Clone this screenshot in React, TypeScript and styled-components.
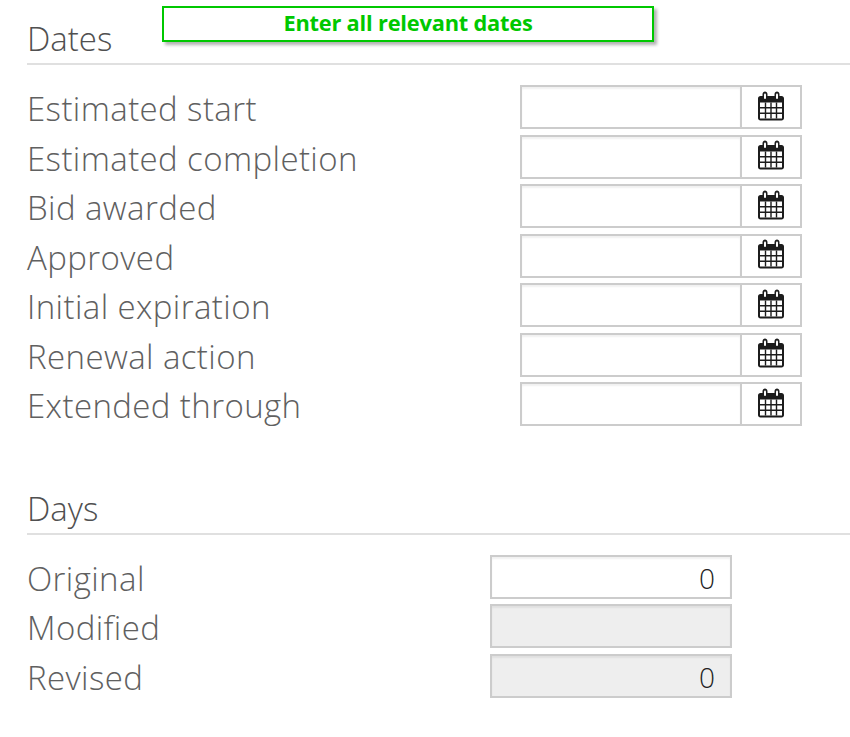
import React from "react";
import styled, { createGlobalStyle } from "styled-components";

const GlobalStyle = createGlobalStyle`
  html, body {
    margin: 0;
    padding: 0;
    background: #fff;
    font-family: "Open Sans", "Noto Sans", "Liberation Sans", sans-serif;
  }
`;

const Page = styled.div`
  position: relative;
  width: 850px;
  height: 737px;
  overflow: hidden;
  padding-left: 27px;
  box-sizing: border-box;
`;

const Section = styled.section<{ $top: number }>`
  padding-top: ${(p) => p.$top}px;
`;

const SectionTitle = styled.h2`
  margin: 0;
  height: 41px;
  line-height: 33px;
  font-size: 33px;
  font-weight: 300;
  color: #505050;
  border-bottom: 2px solid #e0e0e0;
`;

const Rows = styled.div`
  padding-top: 20px;
  display: flex;
  flex-direction: column;
`;

const Row = styled.div`
  height: 49.5px;
  display: flex;
  align-items: flex-start;
`;

const Label = styled.label<{ $width: number }>`
  width: ${(p) => p.$width}px;
  flex: none;
  height: 44px;
  line-height: 48px;
  font-size: 33px;
  font-weight: 300;
  letter-spacing: 0.4px;
  color: #606060;
  white-space: nowrap;
`;

const DateField = styled.div`
  width: 282px;
  height: 44px;
  box-sizing: border-box;
  display: flex;
  border: 2px solid #cccccc;
  background: #fff;
`;

const DateInput = styled.div`
  flex: 1;
  box-shadow: inset 0 2px 2px rgba(0, 0, 0, 0.06);
`;

const CalendarButton = styled.div`
  width: 60px;
  flex: none;
  border-left: 2px solid #cccccc;
  display: flex;
  align-items: center;
  justify-content: center;
  padding-bottom: 3px;
  box-sizing: border-box;
`;

const NumberField = styled.div<{ $disabled?: boolean }>`
  width: 242px;
  height: 44px;
  box-sizing: border-box;
  border: 2px solid #cccccc;
  background: ${(p) => (p.$disabled ? "#eeeeee" : "#fff")};
  box-shadow: inset 0 2px 2px rgba(0, 0, 0, 0.06);
  text-align: right;
  padding-right: 15px;
  line-height: 42px;
  font-size: 28px;
  font-weight: 300;
  color: #222;
`;

const Hint = styled.div`
  position: absolute;
  left: 162px;
  top: 6px;
  width: 492px;
  height: 36px;
  box-sizing: border-box;
  border: 2px solid #00c800;
  background: #fff;
  box-shadow: 3px 3px 3px rgba(0, 0, 0, 0.3);
  text-align: center;
  font-size: 21.8px;
  font-weight: 700;
  line-height: 30px;
  letter-spacing: -0.2px;
  color: #00c800;
`;

const CalendarIcon = () => (
  <svg width="28" height="30" viewBox="0 0 28 30">
    <path
      d="M1 7.5C1 6 2 5 3.5 5H5.5V3.5C5.5 1.5 6.8 .6 8 .6S10.5 1.5 10.5 3.5V5H17.5V3.5C17.5 1.5 18.8 .6 20 .6S22.5 1.5 22.5 3.5V5H24.5C26 5 27 6 27 7.5V27C27 28.5 26 29.5 24.5 29.5H3.5C2 29.5 1 28.5 1 27Z"
      fill="#1c1c1c"
    />
    <rect x="7" y="2.4" width="2" height="5.6" rx="1" fill="#fff" />
    <rect x="19" y="2.4" width="2" height="5.6" rx="1" fill="#fff" />
    <path d="M3 11.5H25V27.5H3Z" fill="#fff" />
    <path
      d="M8.5 11.5V27.5M14 11.5V27.5M19.5 11.5V27.5M3 16.8H25M3 22.2H25"
      stroke="#1c1c1c"
      strokeWidth="1.4"
      fill="none"
    />
  </svg>
);

const dateLabels = [
  "Estimated start",
  "Estimated completion",
  "Bid awarded",
  "Approved",
  "Initial expiration",
  "Renewal action",
  "Extended through",
];

const dayRows = [
  { label: "Original", value: "0", disabled: false },
  { label: "Modified", value: "", disabled: true },
  { label: "Revised", value: "0", disabled: true },
];

const App = () => (
  <Page>
    <GlobalStyle />
    <Hint>Enter all relevant dates</Hint>
    <Section $top={22}>
      <SectionTitle>Dates</SectionTitle>
      <Rows>
        {dateLabels.map((label) => (
          <Row key={label}>
            <Label $width={493}>{label}</Label>
            <DateField>
              <DateInput />
              <CalendarButton>
                <CalendarIcon />
              </CalendarButton>
            </DateField>
          </Row>
        ))}
      </Rows>
    </Section>
    <Section $top={60.25}>
      <SectionTitle>Days</SectionTitle>
      <Rows>
        {dayRows.map((row) => (
          <Row key={row.label}>
            <Label $width={463}>{row.label}</Label>
            <NumberField $disabled={row.disabled}>{row.value}</NumberField>
          </Row>
        ))}
      </Rows>
    </Section>
  </Page>
);

export default App;
